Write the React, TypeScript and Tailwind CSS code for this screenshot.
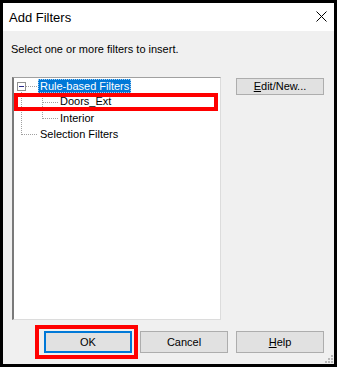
import React from "react";

const font = { fontFamily: '"Liberation Sans", Arial, sans-serif' };

function TreeLines() {
	// dotted connector lines and the expand box of the tree
	return (
		<svg className="absolute left-0 top-0" width="80" height="70" shapeRendering="crispEdges">
			<g stroke="#a0a0a0" strokeDasharray="1 1" fill="none">
				<line x1="12" y1="8.5" x2="24" y2="8.5" />
				<line x1="7.5" y1="14" x2="7.5" y2="57" />
				<line x1="7.5" y1="56.5" x2="24" y2="56.5" />
				<line x1="28.5" y1="16" x2="28.5" y2="41" />
				<line x1="28.5" y1="24.5" x2="44" y2="24.5" />
				<line x1="28.5" y1="40.5" x2="44" y2="40.5" />
			</g>
			<rect x="3.5" y="4.5" width="8" height="8" fill="#fff" stroke="#919191" />
			<line x1="5" y1="8.5" x2="10" y2="8.5" stroke="#2b2b8a" />
		</svg>
	);
}

function Btn({ children, primary = false, className = "" }: { children: React.ReactNode; primary?: boolean; className?: string }) {
	return (
		<div
			className={`flex items-center justify-center bg-[#e1e1e1] text-[11px] text-black ${
				primary ? "border-2 border-[#0078d7]" : "border border-[#adadad]"
			} ${className}`}
		>
			{children}
		</div>
	);
}

export default function App() {
	return (
		<div className="w-[337px] h-[367px] bg-black p-[3px]" style={font}>
			<div className="relative flex flex-col w-full h-full bg-[#f0f0f0]">
				{/* title bar */}
				<div className="flex items-center justify-between h-[28px] bg-white pl-[6px] pr-[7px]">
					<span className="text-[13px] text-black leading-none">Add Filters</span>
					<svg width="11" height="11" viewBox="0 0 11 11" className="mb-[2px]">
						<path d="M0.5 0.5 L10.5 10.5 M10.5 0.5 L0.5 10.5" stroke="#000" strokeWidth="1" />
					</svg>
				</div>

				<div className="pl-[8px] pt-[11px] text-[11px] leading-[14px] text-black">
					Select one or more filters to insert.
				</div>

				<div className="flex mt-[21px] pl-[9px]">
					<div className="relative w-[209px] h-[243px] bg-white border-l-2 border-t border-l-[#7a7a7a] border-t-[#a0a0a0] border-r border-b border-r-[#dcdcdc] border-b-[#dcdcdc]">
						<div className="relative text-[11px] text-black">
							<TreeLines />
							<div className="h-[16px] pl-[24px]">
								<span className="inline-block h-[14px] leading-[12px] px-[1px] bg-[#0078d7] text-white border border-dotted border-[#9ecbf0]">
									Rule-based Filters
								</span>
							</div>
							<div className="h-[16px] pl-[46px] leading-[15px]">Doors_Ext</div>
							<div className="h-[16px] pl-[46px] leading-[16px]">Interior</div>
							<div className="h-[16px] pl-[26px] leading-[16px]">Selection Filters</div>
						</div>
						{/* annotation */}
						<div className="absolute left-0 top-[15px] w-[204px] h-[18px] border-4 border-[#ff0000]" />
					</div>

					<div className="ml-[15px] pt-[1px]">
						<Btn className="w-[88px] h-[17px]">
							<span>
								<span className="underline">E</span>dit/New...
							</span>
						</Btn>
					</div>
				</div>

				<div className="flex gap-[8px] mt-[11px] pl-[41px]">
					<div className="relative">
						<Btn primary className="w-[88px] h-[22px]">OK</Btn>
						<div className="absolute left-[-9px] top-[-6px] w-[103px] h-[34px] border-4 border-[#ff0000]" />
					</div>
					<Btn className="w-[88px] h-[22px]">Cancel</Btn>
					<Btn className="w-[88px] h-[22px]">
						<span>
							<span className="underline">H</span>elp
						</span>
					</Btn>
				</div>

				{/* resize grip */}
				<svg className="absolute right-0 bottom-0" width="9" height="9" shapeRendering="crispEdges">
					<g fill="#b8b8b8">
						<rect x="6" y="0" width="2" height="2" />
						<rect x="3" y="3" width="2" height="2" />
						<rect x="6" y="3" width="2" height="2" />
						<rect x="0" y="6" width="2" height="2" />
						<rect x="3" y="6" width="2" height="2" />
						<rect x="6" y="6" width="2" height="2" />
					</g>
				</svg>
			</div>
		</div>
	);
}
